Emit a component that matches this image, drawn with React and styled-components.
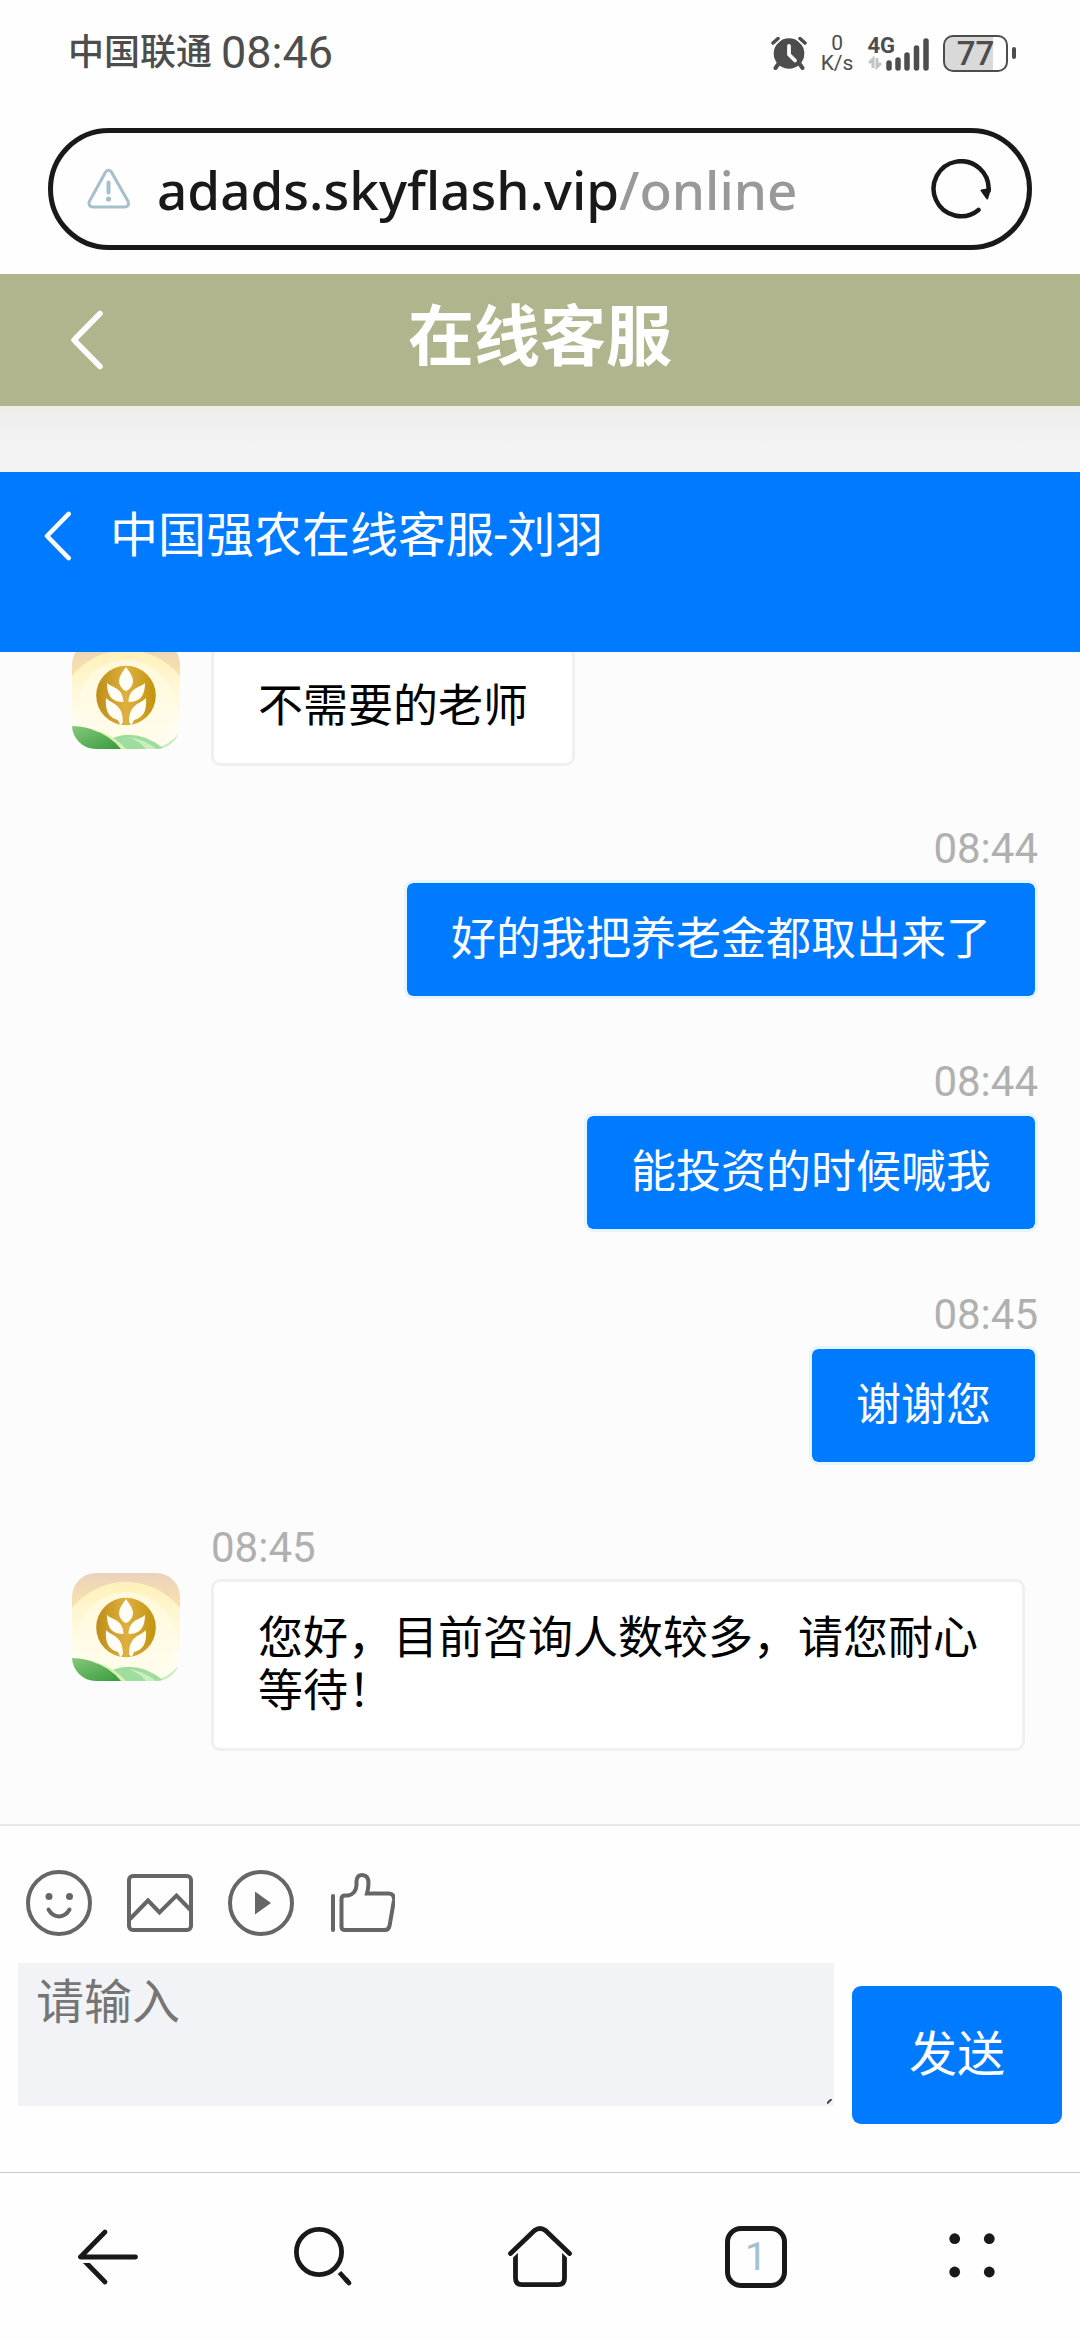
import React, { useState } from 'react';
import styled, { createGlobalStyle } from 'styled-components';

const GlobalStyle = createGlobalStyle`
  * {
    box-sizing: border-box;
  }
  body {
    margin: 0;
    background: #fefefe;
    font-family: Roboto, 'Noto Sans CJK SC', sans-serif;
  }
  button {
    padding: 0;
    border: none;
    background: none;
    font-family: inherit;
    cursor: pointer;
  }
  svg {
    display: block;
    flex: none;
  }
`;

const Page = styled.div`
  display: flex;
  flex-direction: column;
  height: 100vh;
`;

/* phone status bar */
const StatusBar = styled.div`
  display: flex;
  align-items: center;
  justify-content: space-between;
  height: 104px;
  padding: 2px 64px 0 68px;
  color: #4d4d4d;
`;

const StatusGroup = styled.div`
  display: flex;
  align-items: center;
  gap: ${({ $gap }) => $gap}px;
`;

const Carrier = styled.span`
  font-size: 36px;
  font-weight: 500;
  line-height: 48px;
`;

const Clock = styled.span`
  font-size: 45px;
  line-height: 48px;
`;

const NetSpeed = styled.span`
  display: flex;
  flex-direction: column;
  align-items: center;
  font-size: 21px;
  line-height: 20px;
`;

const Signal = styled.span`
  display: flex;
  align-items: flex-end;
`;

const SignalType = styled.span`
  display: flex;
  flex-direction: column;
  margin-right: -10px;
  font-size: 22px;
  font-weight: 700;
  line-height: 19px;
`;

const Battery = styled.span`
  display: flex;
  align-items: center;
  gap: 4px;
  &::after {
    content: '';
    width: 4px;
    height: 12px;
    border-radius: 2px;
    background: #4d4d4d;
  }
`;

const BatteryBody = styled.span`
  display: flex;
  align-items: center;
  justify-content: center;
  width: 65px;
  height: 37px;
  border: 2px solid #4d4d4d;
  border-radius: 10px;
  background: linear-gradient(to right, #d9d9d9 78%, #fefefe 78%);
  font-size: 33px;
  font-weight: 500;
  line-height: 33px;
`;

/* browser address bar */
const AddressBar = styled.div`
  display: flex;
  align-items: center;
  height: 122px;
  margin: 24px 48px;
  padding: 0 36px 0 34px;
  border: 5px solid #191919;
  border-radius: 61px;
`;

const Address = styled.button`
  flex: 1;
  margin-left: 26px;
  padding-top: 2px;
  color: #191919;
  font-family: 'Noto Sans', sans-serif;
  font-size: 53px;
  font-weight: 500;
  line-height: 72px;
  text-align: left;
`;

const Path = styled.span`
  color: #999;
`;

/* site header */
const SiteHeader = styled.header`
  display: grid;
  grid-template-columns: 1fr auto 1fr;
  align-items: center;
  height: 132px;
  padding: 0 68px;
  background: #b0b58d;
  color: #fff;
`;

const SiteTitle = styled.h1`
  margin: 0;
  padding-bottom: 4px;
  font-size: 66px;
  font-weight: 700;
  line-height: 72px;
`;

const HeaderShade = styled.div`
  flex: none;
  height: 66px;
  background: linear-gradient(#efedec, #f3f3f3 60%);
`;

const ChatHeader = styled.header`
  display: flex;
  align-items: center;
  gap: 38px;
  flex: none;
  height: 180px;
  padding: 0 42px 52px;
  background: #007aff;
  color: #fff;
`;

const ChatTitle = styled.h2`
  margin: 0;
  font-size: 48px;
  font-weight: 400;
  line-height: 64px;
`;

const BackButton = styled.button`
  display: flex;
  align-items: center;
  justify-self: start;
  height: 72px;
`;

/* messages */
const MessageList = styled.main`
  display: flex;
  flex-direction: column;
  justify-content: flex-end;
  gap: 57px;
  flex: 1 1 0;
  min-height: 0;
  padding: 0 42px 73px 72px;
  overflow: hidden;
  background: #fcfcfc;
`;

const MessageItem = styled.article`
  display: flex;
  flex-direction: column;
  align-items: ${({ $mine }) => ($mine ? 'flex-end' : 'flex-start')};
`;

const Time = styled.time`
  margin-left: ${({ $mine }) => ($mine ? 0 : 139)}px;
  color: #b0b0b0;
  font-size: 42px;
  line-height: 51px;
`;

const MessageRow = styled.div`
  display: flex;
  align-items: flex-start;
  gap: 31px;
`;

const Bubble = styled.p`
  max-width: 814px;
  margin: 6px 0 0;
  padding: 30px 44px;
  border: 3px solid ${({ $mine }) => ($mine ? '#e6f4fb' : '#f0f0f0')};
  border-radius: 9px;
  background: ${({ $mine }) => ($mine ? '#007aff' : '#fff')};
  background-clip: padding-box;
  color: ${({ $mine }) => ($mine ? '#fff' : '#000')};
  font-size: 45px;
  line-height: 53px;
`;

/* composer */
const Composer = styled.form`
  flex: none;
  height: 348px;
  padding: 44px 18px 0;
  border-top: 2px solid #e8e8e8;
`;

const Tools = styled.div`
  display: flex;
  gap: 35px;
  padding: 0 8px;
`;

const ToolButton = styled.button`
  width: 66px;
  height: 66px;
  color: #666;
`;

const InputRow = styled.div`
  display: flex;
  align-items: flex-start;
  gap: 18px;
  margin-top: 27px;
`;

const Field = styled.label`
  position: relative;
  flex: 1;
  height: 143px;
`;

const MessageInput = styled.textarea`
  display: block;
  width: 100%;
  height: 100%;
  padding: 10px 18px;
  border: none;
  outline: none;
  resize: none;
  background: #f2f3f7;
  color: #333;
  font-family: Roboto, 'Noto Sans CJK SC', sans-serif;
  font-size: 48px;
  line-height: 60px;
  &::placeholder {
    color: #757575;
  }
`;

const Grip = styled.svg`
  position: absolute;
  right: 2px;
  bottom: 2px;
`;

const SendButton = styled.button`
  width: 210px;
  height: 138px;
  margin-top: 23px;
  border-radius: 9px;
  background: #007aff;
  color: #fff;
  font-size: 48px;
  line-height: 60px;
`;

/* browser bottom bar */
const BottomNav = styled.nav`
  display: grid;
  grid-template-columns: repeat(5, 1fr);
  flex: none;
  height: 168px;
  border-top: 1px solid #c8c8c8;
`;

const NavButton = styled.button`
  display: flex;
  align-items: center;
  justify-content: center;
  color: #191919;
`;

const TabCount = styled.span`
  display: flex;
  align-items: center;
  justify-content: center;
  width: 62px;
  height: 62px;
  border: 5px solid #191919;
  border-radius: 16px;
  color: #a6c0d0;
  font-size: 39px;
  line-height: 48px;
`;

const messages = [
  { id: 1, text: '不需要的老师' },
  { id: 2, time: '08:44', text: '好的我把养老金都取出来了', mine: true },
  { id: 3, time: '08:44', text: '能投资的时候喊我', mine: true },
  { id: 4, time: '08:45', text: '谢谢您', mine: true },
  { id: 5, time: '08:45', text: '您好，目前咨询人数较多，请您耐心等待！' },
];

const AlarmIcon = () => (
  <svg width="36" height="34" viewBox="0 0 36 34" fill="none" strokeLinecap="round">
    <circle cx="18" cy="17.5" r="15.3" fill="#4d4d4d" />
    <path d="M2 7l5-4.500M34 7l-5-4.500" stroke="#fefefe" strokeWidth="7" />
    <path d="M2 7l5-4.500M34 7l-5-4.500" stroke="#4d4d4d" strokeWidth="3.500" />
    <path d="M8 27l-3.500 5M28 27l3.500 5" stroke="#4d4d4d" strokeWidth="4" />
    <path d="M18 10v8.500l6 6" stroke="#fefefe" strokeWidth="3.800" strokeLinejoin="round" />
  </svg>
);

const DataArrows = () => (
  <svg width="16" height="16" viewBox="0 0 16 16" fill="none" stroke="#c4c4c4" strokeWidth="3">
    <path d="M6 13V4L2 8M10 3v9l4-4" />
  </svg>
);

const SignalBars = () => (
  <svg width="44" height="34" viewBox="0 0 44 34" stroke="#4d4d4d" strokeWidth="5.500" strokeLinecap="round">
    <path d="M4 26v5M13 23v8M22 18v13M31.500 11v20M41 4v27" />
  </svg>
);

const WarningIcon = () => (
  <svg width="44" height="42" viewBox="0 0 44 42" fill="none" stroke="#a6bfcc" strokeLinecap="round">
    <path
      d="M18.500 4.200Q21.500.5 24.500 4.200L41.200 33.500Q42.500 38.500 38 39H5.500Q1 38.500 2.300 33.500Z"
      strokeWidth="3"
    />
    <path d="M21.500 14.500v10" strokeWidth="4" />
    <circle cx="21.500" cy="31" r="2.600" fill="#a6bfcc" stroke="none" />
  </svg>
);

const ReloadIcon = () => (
  <svg width="60" height="60" viewBox="0 0 60 60" fill="none">
    <path
      d="M47.500 51A27.500 27.500 0 1 1 57.500 32"
      stroke="#191919"
      strokeWidth="4.500"
      strokeLinecap="round"
    />
    <path d="M50.500 31.500l8.500-1.500-2.800 9.500z" fill="#191919" stroke="#191919" strokeWidth="2" strokeLinejoin="round" />
  </svg>
);

const BackIcon = ({ width, height }) => (
  <svg
    width={width}
    height={height}
    viewBox="0 0 34 60"
    fill="none"
    stroke="#fff"
    strokeWidth="5.500"
    strokeLinecap="round"
    strokeLinejoin="round"
  >
    <path d="M31 3.500L5 30l26 26.500" />
  </svg>
);

const Leaves = () => (
  <>
    <path d="M35 42C40 47 51 46 51.500 61C42 61 35 57 35 42Z" />
    <path d="M34 57C39 63 51 62 51 81L48.500 84.500L46 79C37 77 33 70 34 57Z" />
  </>
);

const Avatar = () => (
  <svg width="108" height="108" viewBox="0 0 108 108" role="img" aria-label="客服头像">
    <defs>
      <clipPath id="avatarClip">
        <rect width="108" height="108" rx="24" />
      </clipPath>
      <linearGradient id="sky" x2="0" y2="1">
        <stop offset="0" stopColor="#ead2bd" />
        <stop offset=".25" stopColor="#f6dfae" />
        <stop offset="1" stopColor="#fff" />
      </linearGradient>
      <linearGradient id="halo" x2="0" y2="1">
        <stop offset="0" stopColor="#fff1b9" />
        <stop offset=".55" stopColor="#fffdf3" />
      </linearGradient>
      <linearGradient id="gold">
        <stop offset="0" stopColor="#bd8d17" />
        <stop offset=".5" stopColor="#dfb040" />
        <stop offset="1" stopColor="#c2930c" />
      </linearGradient>
      <linearGradient id="hill" y2="1">
        <stop offset="0" stopColor="#86c97d" />
        <stop offset="1" stopColor="#36993a" />
      </linearGradient>
    </defs>
    <g clipPath="url(#avatarClip)">
      <rect width="108" height="108" fill="url(#sky)" />
      <circle cx="54" cy="78" r="69" fill="url(#halo)" />
      <circle cx="54" cy="68" r="49" fill="#fffbe5" opacity=".7" />
      <path d="M82 108Q98 104 108 91V108Z" fill="#c2f0b4" />
      <path d="M38 98Q66 86 92 108H45Z" fill="#9fdc9f" />
      <path d="M56 96Q72 98 84 108H74Q68 100 56 96Z" fill="#c9efbf" />
      <path d="M0 85Q30 86 53 108H0Z" fill="url(#hill)" />
      <path d="M18 88Q40 92 54 108H49Q38 94 18 88Z" fill="#d9f2b0" />
      <circle cx="54" cy="54.500" r="29.800" fill="url(#gold)" />
      <g fill="#fffdf4">
        <path d="M54 26C59 33 61 36 61 41C60 46 57 49 54 50C51 49 48 46 47 41C47 36 49 33 54 26Z" />
        <Leaves />
        <g transform="matrix(-1 0 0 1 108 0)">
          <Leaves />
        </g>
      </g>
    </g>
  </svg>
);

const SmileIcon = () => (
  <svg width="66" height="66" viewBox="0 0 66 66" fill="none" stroke="currentColor" strokeWidth="4">
    <circle cx="33" cy="33" r="31" />
    <path d="M22.500 39.500Q26 46 33 46.500Q40 46 43.500 39.500" strokeLinecap="round" />
    <circle cx="23" cy="26.500" r="3.500" fill="currentColor" stroke="none" />
    <circle cx="43.500" cy="26.500" r="3.500" fill="currentColor" stroke="none" />
  </svg>
);

const PictureIcon = () => (
  <svg width="66" height="66" viewBox="0 0 66 66" fill="none" stroke="currentColor" strokeWidth="4">
    <rect x="2" y="6" width="62" height="54" rx="4" />
    <path d="M3 49L21 30.500L32.500 42.500L49.500 25.500L64 40.500" />
  </svg>
);

const PlayIcon = () => (
  <svg width="66" height="66" viewBox="0 0 66 66" fill="none" stroke="currentColor" strokeWidth="4">
    <circle cx="33" cy="33" r="31" />
    <path d="M27 21.500v23L43 33z" fill="currentColor" stroke="none" />
  </svg>
);

const ThumbIcon = () => (
  <svg
    width="66"
    height="66"
    viewBox="0 0 66 66"
    fill="none"
    stroke="currentColor"
    strokeWidth="4"
    strokeLinecap="round"
  >
    <path d="M4 26v34" />
    <path d="M12.500 29Q12.500 25.500 16 25.500H19Q27 24 27.500 15V11Q28 5 33 5Q39.500 5 39.500 13Q39.500 18 38 23.500H60Q65.500 24 65 30L60.500 56Q59.500 60 56 60H16Q12.500 60 12.500 57Z" />
  </svg>
);

const NavIcon = ({ children }) => (
  <svg
    width="80"
    height="80"
    viewBox="0 0 80 80"
    fill="none"
    stroke="currentColor"
    strokeWidth="4.800"
    strokeLinecap="round"
    strokeLinejoin="round"
  >
    {children}
  </svg>
);

function Message({ time, text, mine }) {
  return (
    <MessageItem $mine={mine}>
      {time && <Time $mine={mine}>{time}</Time>}
      <MessageRow>
        {!mine && <Avatar />}
        <Bubble $mine={mine}>{text}</Bubble>
      </MessageRow>
    </MessageItem>
  );
}

export default function App() {
  const [draft, setDraft] = useState('');

  return (
    <Page>
      <GlobalStyle />
      <StatusBar>
        <StatusGroup $gap={9}>
          <Carrier>中国联通</Carrier>
          <Clock>08:46</Clock>
        </StatusGroup>
        <StatusGroup $gap={14}>
          <AlarmIcon />
          <NetSpeed>
            <span>0</span>
            <span>K/s</span>
          </NetSpeed>
          <Signal>
            <SignalType>
              4G
              <DataArrows />
            </SignalType>
            <SignalBars />
          </Signal>
          <Battery>
            <BatteryBody>77</BatteryBody>
          </Battery>
        </StatusGroup>
      </StatusBar>

      <AddressBar>
        <WarningIcon />
        <Address type="button">
          adads.skyflash.vip<Path>/online</Path>
        </Address>
        <button type="button" aria-label="刷新">
          <ReloadIcon />
        </button>
      </AddressBar>

      <SiteHeader>
        <BackButton type="button" aria-label="返回">
          <BackIcon width={36} height={60} />
        </BackButton>
        <SiteTitle>在线客服</SiteTitle>
      </SiteHeader>
      <HeaderShade />

      <ChatHeader>
        <BackButton type="button" aria-label="返回">
          <BackIcon width={30} height={50} />
        </BackButton>
        <ChatTitle>中国强农在线客服-刘羽</ChatTitle>
      </ChatHeader>

      <MessageList>
        {messages.map((item) => (
          <Message key={item.id} time={item.time} text={item.text} mine={item.mine} />
        ))}
      </MessageList>

      <Composer onSubmit={(e) => e.preventDefault()}>
        <Tools>
          <ToolButton type="button" aria-label="表情">
            <SmileIcon />
          </ToolButton>
          <ToolButton type="button" aria-label="图片">
            <PictureIcon />
          </ToolButton>
          <ToolButton type="button" aria-label="视频">
            <PlayIcon />
          </ToolButton>
          <ToolButton type="button" aria-label="评价">
            <ThumbIcon />
          </ToolButton>
        </Tools>
        <InputRow>
          <Field>
            <MessageInput
              aria-label="请输入"
              placeholder="请输入"
              value={draft}
              onChange={(e) => setDraft(e.target.value)}
            />
            <Grip width="5" height="5" viewBox="0 0 5 5" stroke="#444" strokeWidth="2">
              <path d="M0 4.500L4.500 0" />
            </Grip>
          </Field>
          <SendButton type="submit">发送</SendButton>
        </InputRow>
      </Composer>

      <BottomNav>
        <NavButton type="button" aria-label="后退">
          <NavIcon>
            <path d="M12.500 40L37 65" />
            <path d="M6 43.500H40" stroke="#fefefe" strokeLinecap="butt" />
            <path d="M37 15L12.500 40H67.500" />
          </NavIcon>
        </NavButton>
        <NavButton type="button" aria-label="搜索">
          <NavIcon>
            <circle cx="35" cy="35" r="22.600" />
            <path d="M62 62.500l3 3.500" />
            <path d="M55.500 55.500L64 65" strokeLinecap="butt" />
          </NavIcon>
        </NavButton>
        <NavButton type="button" aria-label="主页">
          <NavIcon>
            <path d="M15.500 36V61Q15.500 67.700 22 67.700H58Q64.500 67.700 64.500 61V36" />
            <path d="M8 42L35 16Q40 11 45 16L72 42" stroke="#fefefe" strokeWidth="5" strokeLinecap="butt" />
            <path d="M10.500 36.500L34.500 13.500Q40 9.500 45.500 13.500L69.500 36.500" />
          </NavIcon>
        </NavButton>
        <NavButton type="button" aria-label="标签页">
          <TabCount>1</TabCount>
        </NavButton>
        <NavButton type="button" aria-label="菜单">
          <NavIcon>
            <g fill="currentColor" stroke="none">
              <circle cx="22.700" cy="21.700" r="5.400" />
              <circle cx="57.300" cy="21.700" r="5.400" />
              <circle cx="22.700" cy="55" r="5.400" />
              <circle cx="57.300" cy="55" r="5.400" />
            </g>
          </NavIcon>
        </NavButton>
      </BottomNav>
    </Page>
  );
}
